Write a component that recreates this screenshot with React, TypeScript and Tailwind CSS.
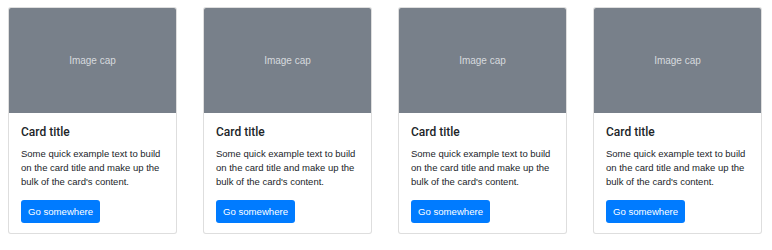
import React from "react";

function Card() {
  return (
    <div className="w-[169px] shrink-0 rounded-[3px] border border-[rgba(0,0,0,0.13)] bg-white overflow-hidden flex flex-col">
      <div className="h-[105px] bg-[#78808a] flex items-center justify-center">
        <span className="text-[10px] text-[#d6dade]">Image cap</span>
      </div>
      <div className="px-[12px] pt-[12px] pb-[10px]">
        <h5
          className="text-[12px] leading-[14px] font-medium text-[#212529] mb-[8px]"
          style={{ fontFamily: "Roboto, Arial, sans-serif" }}
        >
          Card title
        </h5>
        <p className="text-[9.5px] leading-[14px] text-[#212529] mb-[8.5px]">
          Some quick example text to build on the card title and make up the bulk of the card's content.
        </p>
        <button className="h-[22.3px] px-[7px] rounded-[3px] bg-[#007bff] text-white text-[9.6px] leading-[14px]">
          Go somewhere
        </button>
      </div>
    </div>
  );
}

export default function App() {
  return (
    <div
      className="w-[772px] h-[250px] bg-white pt-[7px] pl-[8px] flex items-start gap-[26px]"
      style={{ fontFamily: '"Liberation Sans", Arial, sans-serif' }}
    >
      <Card />
      <Card />
      <Card />
      <Card />
    </div>
  );
}
